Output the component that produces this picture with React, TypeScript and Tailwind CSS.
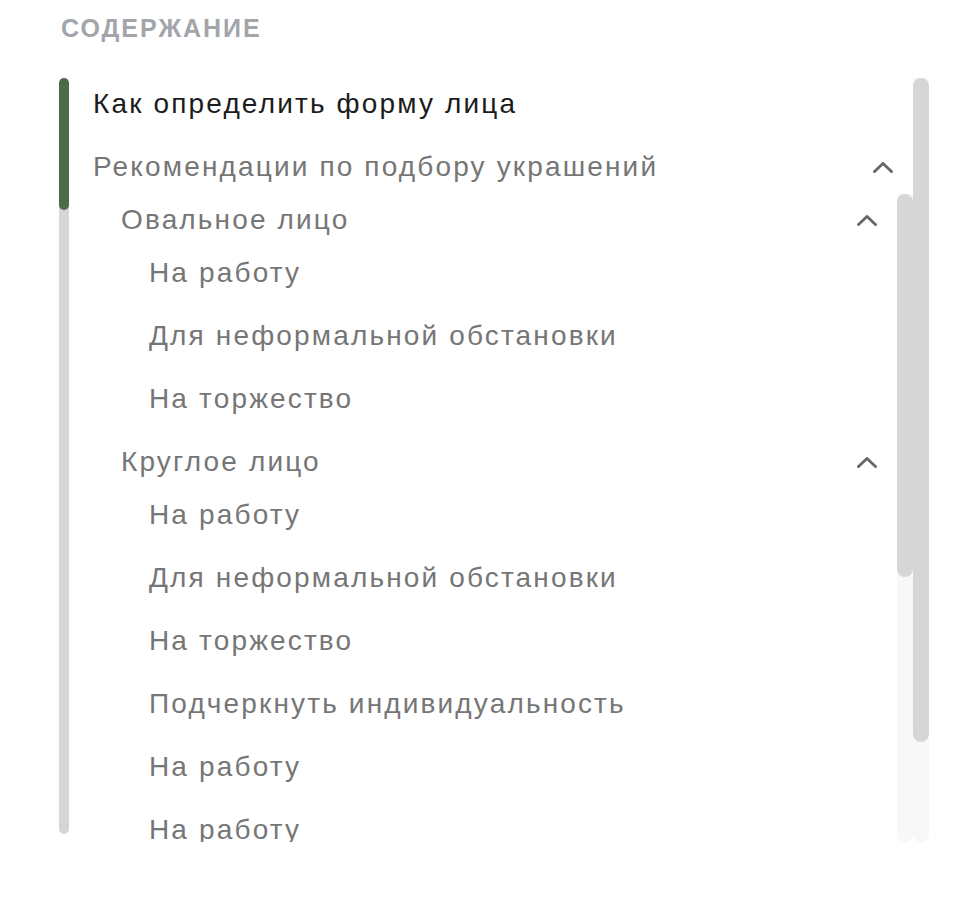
import React from 'react';

type Node = { title: string; children?: Node[] };

const oval: Node[] = [
  { title: 'На работу' },
  { title: 'Для неформальной обстановки' },
  { title: 'На торжество' },
];

const round: Node[] = [
  { title: 'На работу' },
  { title: 'Для неформальной обстановки' },
  { title: 'На торжество' },
  { title: 'Подчеркнуть индивидуальность' },
  { title: 'На работу' },
  { title: 'На работу' },
  { title: 'На торжество' },
];

function Chevron() {
  return (
    <svg width="20" height="11" viewBox="0 0 20 11" fill="none" className="shrink-0">
      <polyline points="1.5,9.5 10,1.5 18.5,9.5" stroke="#676767" strokeWidth="2.8" strokeLinecap="square" />
    </svg>
  );
}

function Row({ title, open, dark }: { title: string; open?: boolean; dark?: boolean }) {
  return (
    <div className="h-[44px] flex items-center justify-between pr-[20px]">
      <span className={dark ? 'text-[#1c1c1c] whitespace-nowrap' : 'text-[#767676] whitespace-nowrap'}>{title}</span>
      {open && <Chevron />}
    </div>
  );
}

function Scrollbar({ height, thumb }: { height: string; thumb: string }) {
  return (
    <div className={`w-[16px] shrink-0 bg-[#f8f8f8] rounded-b-full ${height}`}>
      <div className={`w-full rounded-full bg-[#d6d6d6] ${thumb}`} />
    </div>
  );
}

export default function App() {
  return (
    <div className="w-[976px] h-[916px] bg-white pl-[59px] pt-[10px]" style={{ fontFamily: '"Liberation Sans", Arial, sans-serif' }}>
      <div className="h-[36px] flex items-center pl-[2px] text-[25px] font-bold tracking-[2px] text-[#a2a5aa] leading-none">СОДЕРЖАНИЕ</div>

      <div className="mt-[32px] w-[870px] flex h-[764px] overflow-hidden">
        {/* progress rail */}
        <div className="w-[10px] h-[756px] shrink-0 rounded-full bg-[#d6d6d6]">
          <div className="h-[132px] rounded-full bg-[#4b6b4c]" />
        </div>

        <div className="flex-1 min-w-0 pl-[24px] pt-[4px] text-[28px] tracking-[2.15px] leading-none flex flex-col gap-[19px]">
          <Row title="Как определить форму лица" dark />
          <div className="flex flex-col gap-[5px]">
            <Row title="Рекомендации по подбору украшений" open />
            <div className="flex h-[648px] overflow-hidden">
              <div className="flex-1 min-w-0 pl-[28px] pt-[4px] flex flex-col gap-[19px]">
                <div className="flex flex-col gap-[9px]">
                  <Row title="Овальное лицо" open />
                  <div className="pl-[28px] flex flex-col gap-[19px]">
                    {oval.map((n, i) => <Row key={i} title={n.title} />)}
                  </div>
                </div>
                <div className="flex flex-col gap-[9px]">
                  <Row title="Круглое лицо" open />
                  <div className="pl-[28px] flex flex-col gap-[19px]">
                    {round.map((n, i) => <Row key={i} title={n.title} />)}
                  </div>
                </div>
              </div>
              <Scrollbar height="h-[648px]" thumb="h-[383px]" />
            </div>
          </div>
        </div>

        <Scrollbar height="h-[764px]" thumb="h-[664px]" />
      </div>
    </div>
  );
}
